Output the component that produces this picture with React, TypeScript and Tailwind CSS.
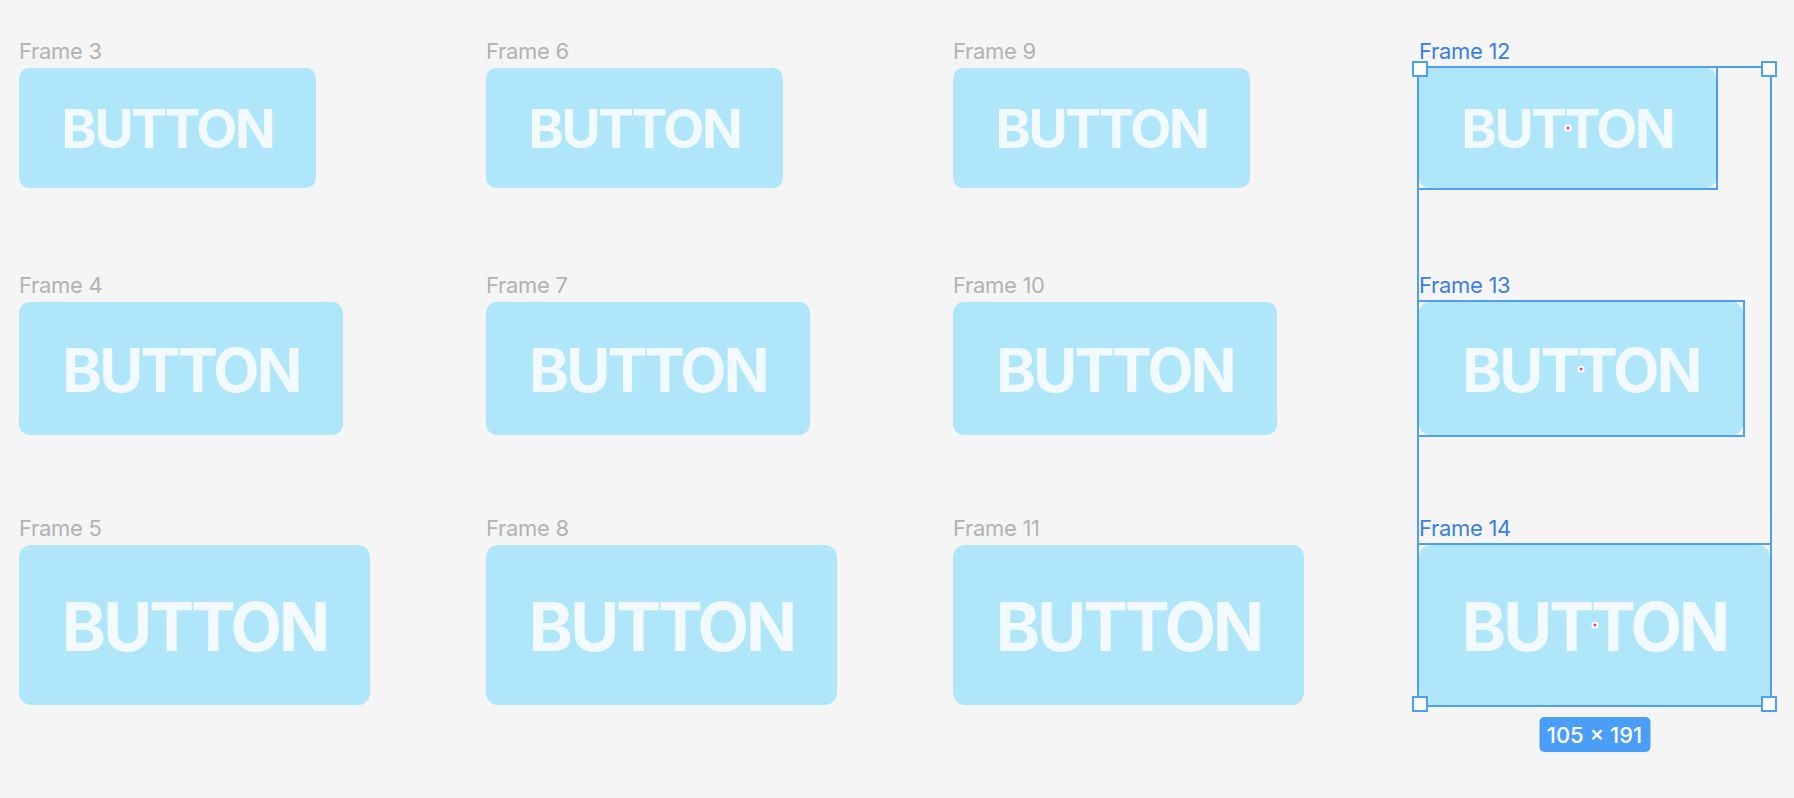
import React from "react";

type Size = { w: string; h: string; text: string; radius: string };

const sizes: Size[] = [
  { w: "w-[297px]", h: "h-[120px]", text: "text-[53.5px]", radius: "rounded-[10px]" },
  { w: "w-[324px]", h: "h-[133px]", text: "text-[60px]", radius: "rounded-[11px]" },
  { w: "w-[351px]", h: "h-[160px]", text: "text-[67px]", radius: "rounded-[12px]" },
];

const rowMargins = ["", "mt-[87px]", "mt-[83px]"];

function Button({ size, selected }: { size: Size; selected?: boolean }) {
  return (
    <div className={`relative mt-[3px] ${size.w} ${size.h}`}>
      <div
        className={`flex h-full w-full items-center justify-center bg-[#b0e6fa] ${size.radius}`}
      >
        <span
          className={`pt-[2px] font-bold leading-none tracking-[-0.045em] text-[#f2faff] ${size.text}`}
        >
          BUTTON
        </span>
      </div>
      {selected && (
        <>
          <div className="absolute -inset-[2px] border-2 border-[#4c9ef8]" />
          <div className="absolute left-1/2 top-1/2 flex h-[7px] w-[7px] -translate-x-1/2 -translate-y-1/2 items-center justify-center rounded-full bg-white">
            <div className="h-[3px] w-[3px] rounded-full bg-[#e8389b]" />
          </div>
        </>
      )}
    </div>
  );
}

function Cell({
  label,
  size,
  row,
  selected,
}: {
  label: string;
  size: Size;
  row: number;
  selected?: boolean;
}) {
  return (
    <div className={`flex flex-col ${rowMargins[row]}`}>
      <div
        className={`h-[24px] text-[22px] leading-[20px] tracking-[-0.3px] ${
          selected ? "text-[#3b80e0]" : "text-[#b2b2b2]"
        }`}
      >
        {label}
      </div>
      <Button size={size} selected={selected} />
    </div>
  );
}

const Handle = ({ pos }: { pos: string }) => (
  <div className={`absolute h-[16px] w-[16px] border-2 border-[#4c9ef8] bg-white ${pos}`} />
);

export default function App() {
  const columns = [
    ["Frame 3", "Frame 4", "Frame 5"],
    ["Frame 6", "Frame 7", "Frame 8"],
    ["Frame 9", "Frame 10", "Frame 11"],
  ];
  return (
    <div className="relative h-[798px] w-full overflow-hidden bg-[#f5f5f5] font-['Inter','Noto_Sans',sans-serif]">
      <div className="flex pl-[19px] pt-[41px]">
        {columns.map((col, ci) => (
          <div key={ci} className={`flex flex-col ${ci === 2 ? "w-[466px]" : "w-[467px]"}`}>
            {col.map((label, ri) => (
              <Cell key={label} label={label} size={sizes[ri]} row={ri} />
            ))}
          </div>
        ))}
        <div className="relative flex w-[360px] flex-col">
          {["Frame 12", "Frame 13", "Frame 14"].map((label, ri) => (
            <Cell key={label} label={label} size={sizes[ri]} row={ri} selected />
          ))}
          <div className="absolute left-[-2px] top-[25px] h-[641px] w-[355px] border-2 border-[#4c9ef8]">
            <Handle pos="-left-[7px] -top-[7px]" />
            <Handle pos="-right-[7px] -top-[7px]" />
            <Handle pos="-left-[7px] -bottom-[7px]" />
            <Handle pos="-right-[7px] -bottom-[7px]" />
            <div className="absolute left-1/2 top-full mt-[12px] flex h-[35px] w-[111px] -translate-x-1/2 items-center justify-center rounded-[5px] bg-[#4a9ef8] text-[22px] font-medium leading-none text-white">
              105 × 191
            </div>
          </div>
        </div>
      </div>
    </div>
  );
}
